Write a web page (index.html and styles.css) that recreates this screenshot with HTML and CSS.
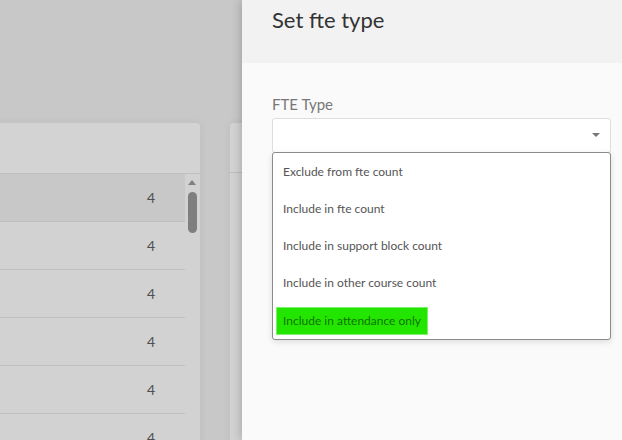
FILE: index.html
```html
<!DOCTYPE html>
<html>
    <head>
        <meta http-equiv="Content-Type" content="text/html; charset=utf-8" />
        <meta name="viewport" content="width=device-width, initial-scale=1.0">
        <link rel="stylesheet" href="styles.css">
    </head>
<body>
    <div class="page">
        <div class="cardRow">
            <div class="card cardMain">
                <div class="cardHead"></div>
                <div class="cardBody">
                    <div class="rows">
                        <div class="row active">4</div>
                        <div class="row">4</div>
                        <div class="row">4</div>
                        <div class="row">4</div>
                        <div class="row">4</div>
                        <div class="row">4</div>
                    </div>
                    <div class="scrollBar">
                        <span class="scrollArrow"></span>
                        <span class="scrollThumb"></span>
                    </div>
                </div>
            </div>
            <div class="card cardSide">
                <div class="cardHead small"></div>
                <div class="cardBody"></div>
            </div>
        </div>
    </div>
    <div class="sidePanel">
        <div class="panelHead">
            <h1>Set fte type</h1>
        </div>
        <div class="panelBody">
            <label class="fieldLabel">FTE Type</label>
            <div class="selectBox">
                <span class="caret"></span>
            </div>
            <ul class="optionList">
                <li><span>Exclude from fte count</span></li>
                <li><span>Include in fte count</span></li>
                <li><span>Include in support block count</span></li>
                <li><span>Include in other course count</span></li>
                <li class="selected"><span>Include in attendance only</span></li>
            </ul>
        </div>
    </div>
</body>
</html>
```

FILE: styles.css
```css
html, body{
    margin: 0; padding: 0; height: 100%;
}
body{
    display: flex; overflow: hidden;
    font-family: Lato, "Open Sans", sans-serif;
    background-color: #c8c8c8;
}
.page{
    flex: 1; overflow: hidden; min-width: 0;
}
.cardRow{
    display: flex; gap: 30px;
    padding-top: 123px; margin-left: -20px;
}
.card{
    flex: none; border-radius: 4px 4px 0 0; overflow: hidden;
    box-shadow: 0 0 8px rgba(0,0,0,0.06);
}
.cardMain{ width: 220px; }
.cardSide{ width: 200px; }
.cardHead{
    height: 50px; background-color: #d3d3d3;
    border-bottom: 1px solid #bfbfbf;
}
.cardHead.small{ height: 49px; }
.cardBody{
    display: flex; height: 300px; background-color: #d2d2d2;
}
.rows{ flex: 1; }
.row{
    height: 47px; border-bottom: 1px solid #bfbfbf;
    display: flex; align-items: center; justify-content: flex-end;
    padding-right: 30px; font-size: 14px; color: #505050;
    background-color: #d2d2d2;
}
.row.active{ background-color: #c8c8c8; }
.scrollBar{
    width: 15px; position: relative; background-color: #d2d2d2;
}
.scrollArrow{
    position: absolute; left: 3px; top: 6px;
    border-left: 4px solid transparent; border-right: 4px solid transparent;
    border-bottom: 5px solid #7f7f7f;
}
.scrollThumb{
    position: absolute; left: 3px; top: 18px; width: 9px; height: 41px;
    border-radius: 5px; background-color: #7f7f7f;
}
.sidePanel{
    width: 380px; flex: none; background-color: #fafafa;
    box-shadow: 0 0 10px rgba(0,0,0,0.25);
    position: relative; z-index: 2;
}
.panelHead{
    height: 63px; background-color: #f2f2f2;
    padding: 6px 30px 0; box-sizing: border-box;
}
.panelHead h1{
    margin: 0; font-size: 22px; font-weight: normal; color: #333;
    line-height: normal;
}
.panelBody{
    padding: 32px 11px 0 30px;
}
.fieldLabel{
    display: block; font-size: 15px; color: #777; line-height: 18px;
    margin-bottom: 5px;
}
.selectBox{
    height: 33px; background-color: #fff; border: 1px solid #ddd;
    border-radius: 3px; position: relative;
}
.caret{
    position: absolute; right: 10px; top: 14px;
    border-left: 4px solid transparent; border-right: 4px solid transparent;
    border-top: 4px solid #777;
}
.optionList{
    list-style: none; margin: -1px 0 0; padding: 0;
    background-color: #fff; border: 1px solid #8a8a8a; border-radius: 3px;
    box-shadow: 0 2px 6px rgba(0,0,0,0.12);
    position: relative; z-index: 3;
}
.optionList li{
    height: 37px; display: flex; align-items: center;
    padding: 0 3px; font-size: 12px; color: #555;
}
.optionList li span{
    display: inline-block; line-height: 26px; padding: 0 6px;
    border: 1px solid transparent;
}
.optionList li.selected{ padding-top: 1px; }
.optionList li.selected span{
    background-color: #22e600; border-color: #7ff06e;
    color: rgba(0,0,0,0.55);
}
```
